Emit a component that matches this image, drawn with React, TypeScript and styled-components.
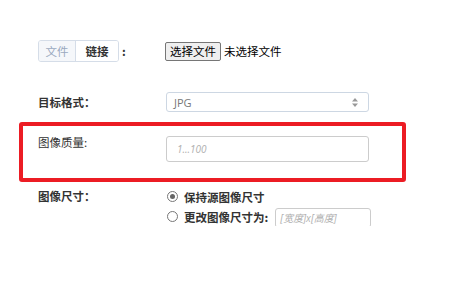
import { createGlobalStyle } from 'styled-components'
import styled from 'styled-components'

const Global = createGlobalStyle`
body {
  margin: 0;
  background: #fff;
  font-family: "Noto Sans CJK SC", "Noto Sans", sans-serif;
  color: #333;
}
`

const Form = styled.div`
display: flex;
flex-direction: column;
padding-top: 40px;
width: 474px;
`

const Row = styled.div<{ $top?: number }>`
display: grid;
grid-template-columns: 128px 203px;
align-items: center;
margin-top: ${p => p.$top ?? 0}px;
padding-left: 38px;
`

// the red frame drawn round the quality row
const Highlight = styled.div`
display: grid;
grid-template-columns: 128px 203px;
align-items: start;
margin: 10px 0 0 19px;
border: 4px solid #ec1c24;
border-radius: 3px;
padding: 10px 0 0 15px;
box-sizing: border-box;
height: 60px;
width: 387px;
`

const Label = styled.div<{ $bold?: boolean; $shift?: number }>`
font-size: 11.5px;
font-weight: ${p => (p.$bold ? 700 : 400)};
color: #333;
line-height: 16px;
margin-top: ${p => p.$shift ?? 0}px;
`

const Segment = styled.div`
display: flex;
align-items: center;
`

const SegGroup = styled.div`
display: flex;
border: 1px solid #d5dde8;
border-radius: 3px;
overflow: hidden;
height: 22px;
box-sizing: border-box;
`

const SegButton = styled.div<{ $active?: boolean }>`
display: flex;
align-items: center;
justify-content: center;
width: ${p => (p.$active ? 36 : 42)}px;
font-size: 11.5px;
font-weight: ${p => (p.$active ? 400 : 700)};
color: ${p => (p.$active ? '#9aa9bf' : '#333')};
background: ${p => (p.$active ? '#f5f7fa' : '#fff')};
border-right: ${p => (p.$active ? '1px solid #d5dde8' : 'none')};
`

const Colon = styled.span`
font-size: 11.5px;
font-weight: 700;
margin-left: 3px;
`

const FileRow = styled.div`
display: flex;
align-items: center;
gap: 3px;
margin-left: -1px;
`

const FileButton = styled.div`
height: 19px;
box-sizing: border-box;
padding: 0 4px;
display: flex;
align-items: center;
background: #efefef;
border: 1px solid #767676;
border-radius: 2px;
font-size: 11.5px;
color: #000;
`

const FileText = styled.span`
font-size: 11.5px;
color: #000;
`

const Select = styled.div`
height: 20px;
box-sizing: border-box;
border: 1px solid #cdd7e3;
border-radius: 3px;
display: flex;
align-items: center;
justify-content: space-between;
padding: 0 10px 0 7px;
font-family: "Open Sans", sans-serif;
font-size: 11px;
color: #777;
`

const Input = styled.div<{ $w: number; $h: number; $pad?: number }>`
width: ${p => p.$w}px;
height: ${p => p.$h}px;
box-sizing: border-box;
border: 1px solid #ccc;
border-radius: 3px;
display: flex;
align-items: center;
padding-left: ${p => p.$pad ?? 10}px;
font-family: "Open Sans", "Noto Sans CJK SC", sans-serif;
font-style: italic;
font-weight: 400;
font-size: 10px;
color: #b0b0b0;
`

const SizeRow = styled.div`
display: grid;
grid-template-columns: 128px 1fr;
align-items: start;
margin-top: 6px;
padding-left: 38px;
`

const Options = styled.div`
display: flex;
flex-direction: column;
gap: 1px;
margin-top: -1px;
`

const Option = styled.div`
display: flex;
align-items: center;
height: 19px;
font-size: 11.5px;
font-weight: 700;
color: #333;
`

const Radio = styled.span<{ $on?: boolean }>`
width: 9px;
height: 9px;
border: 1px solid #777;
border-radius: 50%;
margin: 0 6px 0 1px;
display: flex;
align-items: center;
justify-content: center;
&::after {
  content: '';
  width: 5px;
  height: 5px;
  border-radius: 50%;
  background: ${p => (p.$on ? '#666' : 'transparent')};
}
`

const SizeInput = styled(Input)`
margin-left: 7px;
margin-top: 2px;
`

const Arrows = () => (
  <svg width="6" height="9" viewBox="0 0 6 9">
    <path d="M3 0 L6 3.5 L0 3.5 Z M3 9 L6 5.5 L0 5.5 Z" fill="#999" />
  </svg>
)

export default function App() {
  return (
    <>
      <Global />
      <Form>
        <Row>
          <Segment>
            <SegGroup>
              <SegButton $active>文件</SegButton>
              <SegButton>链接</SegButton>
            </SegGroup>
            <Colon>:</Colon>
          </Segment>
          <FileRow>
            <FileButton>选择文件</FileButton>
            <FileText>未选择文件</FileText>
          </FileRow>
        </Row>
        <Row $top={30}>
          <Label $bold>目标格式：</Label>
          <Select>
            JPG
            <Arrows />
          </Select>
        </Row>
        <Highlight>
          <Label $shift={-2}>图像质量:</Label>
          <Input $w={203} $h={26}>1...100</Input>
        </Highlight>
        <SizeRow>
          <Label $bold>图像尺寸：</Label>
          <Options>
            <Option>
              <Radio $on />
              保持源图像尺寸
            </Option>
            <Option>
              <Radio />
              更改图像尺寸为:
              <SizeInput $w={96} $h={20} $pad={4}>[宽度]x[高度]</SizeInput>
            </Option>
          </Options>
        </SizeRow>
      </Form>
    </>
  )
}
